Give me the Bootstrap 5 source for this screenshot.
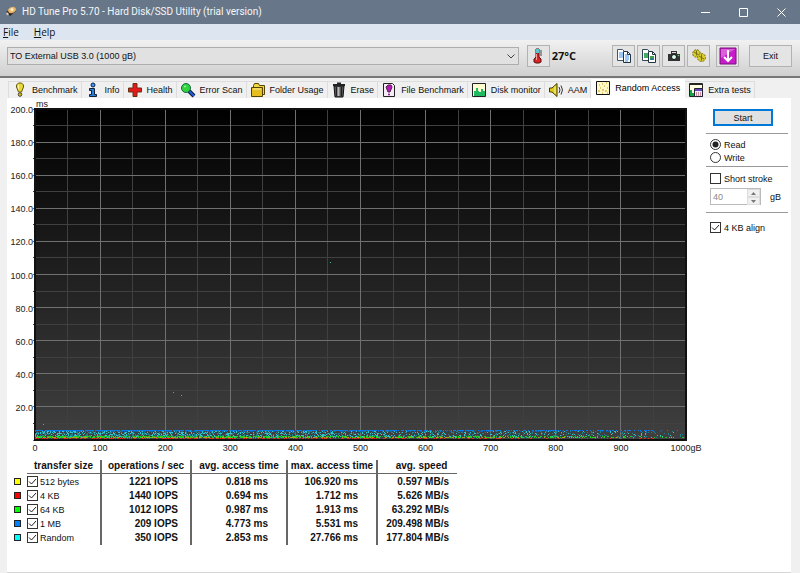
<!DOCTYPE html>
<html lang="en">
<head>
<meta charset="utf-8">
<meta name="viewport" content="width=device-width, initial-scale=1">
<title>HD Tune Pro 5.70 - Hard Disk/SSD Utility (trial version)</title>
<link href="https://cdn.jsdelivr.net/npm/bootstrap@5.3.0/dist/css/bootstrap.min.css" rel="stylesheet">
<style>
body{font-family:"Liberation Sans",Arial,sans-serif;font-size:9px;line-height:14px;color:#111;background:#f0f0f0}
svg{display:block;flex:none}
.titlebar{height:24px;background:#677689;color:#f4f6f8;padding-left:4px}
.titlebar h1{font-family:Roboto,sans-serif;font-size:10px;line-height:14px;font-weight:400;margin:0}
.winbtn{width:38px;height:24px;border:0;background:none;color:#fff;padding:0;display:flex;align-items:center;justify-content:center}
.menubar{height:16px;background:#dde6f0;font-family:"Open Sans",sans-serif;font-size:10px;padding-left:3px;gap:15px}
.menubar a{color:#111;text-decoration:none}
.toolbar{height:38px;padding:0 8px 4px 7px;background:linear-gradient(#f1f1f1,#d0d0d0);border-bottom:2px solid #777}
.drive{--bs-form-select-bg-img:url("data:image/svg+xml,%3Csvg xmlns='http://www.w3.org/2000/svg' viewBox='0 0 8 5'%3E%3Cpath fill='none' stroke='%23444' d='M.5.5 4 4 7.5.5'/%3E%3C/svg%3E");height:18px;min-height:0;padding:0 18px 0 2px;font-size:9px;line-height:14px;color:#111;background-color:#e1e1e1;border:1px solid #adadad;border-radius:0;background-position:right 3px center;background-size:8px 5px}
.tool{height:22px;min-width:23px;padding:0;border:1px solid #b2b2b2;border-radius:0;background:#e4e4e4;font-size:9px;line-height:14px;display:flex;align-items:center;justify-content:center;color:#111}
.gauge{margin-left:8px}
.savebtn{margin-left:6px}
.temp{font-family:"Open Sans",sans-serif;font-size:11px;font-weight:700;margin-left:2px;margin-right:36px}
.exit{width:43px;margin-left:10px}
.tabs{padding:2px 0 0 8px;height:20px;border:0;align-items:flex-end;flex-wrap:nowrap}
.tabs .nav-link{height:17px;display:flex;align-items:center;gap:4px;padding:0 3px 1px;border:1px solid #ddd;border-width:1px 1px 0 0;border-radius:0;margin:0;color:#111;background:#f0f0f0;white-space:nowrap}
.tabs .nav-item:first-child .nav-link{border-left-width:1px}
.tabs .nav-link.active{height:19px;background:#fff;padding:0 4px 2px;border-color:#fff}
.panel{margin:0 9px 0 7px;background:#fff;border-bottom:1px solid #d5d5d5;min-height:475px;padding:11px 3px 0 0}
.plotcol{padding:0 20px 0 28px;min-width:0}
.plot{width:100%;height:331px;overflow:visible;font:9px "Liberation Sans",Arial,sans-serif;fill:#222}
.side{width:82px}
.side hr{margin:0;border-top:1px solid #999;opacity:1}
.start{margin:0 15px 7px 7px;height:17px;padding:0;border:2px solid #0078d7;border-radius:0;background:#e1e1e1;font-size:9px;line-height:12px;color:#111}
.opt{display:flex;align-items:center;gap:3px;padding-left:4px;height:13px}
.form-check-input.tick,.form-check-input.dot{width:11px;height:11px;margin:0;border:1px solid #333;background-color:#fff;background-size:9px 9px;flex:none;float:none}
.tick{border-radius:0!important}
.tick:checked{background-image:url("data:image/svg+xml,%3Csvg xmlns='http://www.w3.org/2000/svg' viewBox='0 0 9 9'%3E%3Cpath fill='none' stroke='%23222' d='M1 4.5 3.5 7 8 2'/%3E%3C/svg%3E")!important}
.dot:checked{background-image:url("data:image/svg+xml,%3Csvg xmlns='http://www.w3.org/2000/svg' viewBox='0 0 9 9'%3E%3Ccircle cx='4.5' cy='4.5' r='3' fill='%23222'/%3E%3C/svg%3E")!important}
.modes{padding:4px 0 2px}
.limits{padding:5px 0 7px}
.limitrow{margin-top:3px;gap:9px}
.aligns{padding-top:8px}
.spin{width:51px;height:17px;border:1px solid #bbb;margin-left:4px}
.spin input{border:0;border-radius:0;padding:0 2px;min-height:0;height:15px;font-size:9px;line-height:14px;color:#888;background:#fff!important}
.spin button{border:1px solid #ddd;background:#f0f0f0;padding:0;width:13px;height:8px;display:flex;align-items:center;justify-content:center}
.results{margin:20px 0 0 7px;width:443px;font:bold 10px/14px "Liberation Sans",Arial,sans-serif;border-collapse:collapse}
.results th,.results td{padding:0;white-space:nowrap}
.results th{text-align:center;height:13px;line-height:12px}
.results thead th:not(:first-child){border-bottom:1px solid #666}
.results thead th:last-child{padding-left:8px}
.results .line{border-left:2px solid #666}
.results tbody td{text-align:right;height:14px;padding-right:12px}
.results tbody tr:first-child td{padding-top:1px;height:15px}
.results tbody td:nth-child(4),.results tbody td:nth-child(5){padding-right:18px}
.results tbody td:last-child{padding-right:8px}
.results tbody td:nth-child(-n+2){text-align:left;padding-right:0}
.results label{font-size:9px;font-weight:400;line-height:14px}
.pick{display:flex;align-items:center;gap:2px}
.c0{width:13px}.c1{width:74px}.c2,.c4{width:90px}.c3{width:96px}.c5{width:80px}
.swatch{display:block;width:7px;height:7px;border:1px solid #222}
.yel{background:#ff0}.red{background:#f00}.grn{background:#0f0}.blu{background:#0080ff}.cya{background:#0ff}
</style>
<script src="https://cdn.jsdelivr.net/npm/bootstrap@5.3.0/dist/js/bootstrap.bundle.min.js"></script>
</head>
<body>
<header class="titlebar d-flex align-items-center">
  <svg width="14" height="14" viewBox="0 0 14 14"><path d="M2 7 6 11 12 6 9 3z" fill="#2b211d"/><ellipse cx="8" cy="5" rx="4" ry="3" fill="#e9b56c" transform="rotate(-25 8 5)"/><circle cx="8" cy="4.500" r="1.500" fill="#fff2c8"/><path d="M3 7 5 9 4 10.500 2 9z" fill="#d8c8b8"/></svg>
  <h1 class="ms-1 flex-grow-1">HD Tune Pro 5.70 - Hard Disk/SSD Utility (trial version)</h1>
  <button class="winbtn" aria-label="Minimize"><svg width="9" height="9"><path d="M0 4.500H9" stroke="#fff"/></svg></button>
  <button class="winbtn" aria-label="Maximize"><svg width="9" height="9"><path d="M.5.5h8v8h-8z" fill="none" stroke="#fff"/></svg></button>
  <button class="winbtn" aria-label="Close"><svg width="9" height="9"><path d="M.5.5l8 8m0-8l-8 8" stroke="#fff"/></svg></button>
</header>
<nav class="menubar d-flex align-items-center" aria-label="Menu"><a href="#"><u>F</u>ile</a><a href="#"><u>H</u>elp</a></nav>
<div class="toolbar d-flex align-items-center">
  <select class="form-select drive flex-grow-1 w-auto" aria-label="Drive"><option>TO External USB 3.0 (1000 gB)</option></select>
  <button class="btn tool gauge" aria-label="Temperature"><svg width="10" height="16" viewBox="0 0 10 16"><path d="M3 1h3v8l2 2v3l-2 1H3l-2-1v-3l2-2z" fill="#d22" stroke="#511"/><path d="M3 1h3v4H3z" fill="#56c6d0"/><path d="M7 3h2M7 5h2M7 7h2" stroke="#444"/><path d="M3.500 6v6" stroke="#f99"/></svg></button>
  <span class="temp">27°C</span>
  <div class="d-flex" style="gap:2px">
    <button class="btn tool" aria-label="Copy text"><svg width="16" height="16" viewBox="0 0 16 16"><path d="M1.500 1.500h5l2 2v9h-7z" fill="#fff" stroke="#456"/><path d="M3 5h4M3 7h4M3 9h4" stroke="#3b8eea"/><path d="M7.500 3.500h4l3 3v8h-7z" fill="#fff" stroke="#234"/><path d="M9 7h4M9 9h4M9 11h4M9 13h3" stroke="#3b8eea"/><path d="M11.500 3.500v3h3" fill="none" stroke="#234"/></svg></button>
    <button class="btn tool" aria-label="Copy picture"><svg width="16" height="16" viewBox="0 0 16 16"><path d="M1.500 1.500h5l2 2v9h-7z" fill="#fff" stroke="#345"/><path d="M3 5h4v5H3z" fill="#4a6"/><path d="M7.500 3.500h4l3 3v8h-7z" fill="#fff" stroke="#234"/><path d="M9 8h4v4H9z" fill="#3b9b4e"/><path d="M9 12l2-2 2 1v1z" fill="#2a6bb0"/><path d="M11.500 3.500v3h3" fill="none" stroke="#234"/></svg></button>
    <button class="btn tool" aria-label="Screenshot"><svg width="14" height="14" viewBox="0 0 14 14"><path d="M1 5h3V2h6v3h3v7H1z" fill="#333"/><path d="M5 3.500h4" stroke="#ddd"/><circle cx="7" cy="8" r="2.500" fill="#dfe" stroke="#111"/><circle cx="11.500" cy="6.500" r=".8" fill="#6c6"/></svg></button>
    <button class="btn tool" aria-label="Options"><svg width="16" height="16" viewBox="0 0 16 16" fill="#d8cc2e" stroke="#777014"><circle cx="5.500" cy="5.500" r="3.800" stroke-dasharray="2 1"/><path d="M5.500 2.500v5M3 4l5 3"/><circle cx="10.500" cy="9.500" r="4" stroke-dasharray="2 1"/><path d="M10.500 6.500v6M8 8l5 3"/></svg></button>
  </div>
  <button class="btn tool savebtn" aria-label="Save"><svg width="18" height="18" viewBox="0 0 18 18"><path d="M1 1h16v16H1z" fill="#c81cc8" stroke="#75127a"/><path d="M2 2h14L2 11z" fill="#dc60dc"/><path d="M9 3v11M5 10l4 4 4-4" stroke="#fff" stroke-width="2" fill="none"/></svg></button>
  <button class="btn tool exit">Exit</button>
</div>
<ul class="nav nav-tabs tabs" aria-label="Tests">
  <li class="nav-item"><button class="nav-link"><svg width="16" height="16" viewBox="0 0 16 16"><path d="M4.500 3l2-2h3l2 2v2l-2 5H6.500L4.500 5z" fill="#e9d734" stroke="#665a10"/><path d="M6.500 3v4" stroke="#fff9aa"/><circle cx="8" cy="12.500" r="1.800" fill="#d3b91d" stroke="#443"/></svg>Benchmark</button></li>
  <li class="nav-item"><button class="nav-link"><svg width="16" height="16" viewBox="0 0 16 16"><circle cx="8" cy="3" r="2" fill="#39f" stroke="#124"/><path d="M4.500 6.500h5v6h2v2h-7v-2h2v-4h-2z" fill="#2b7fdc" stroke="#123"/></svg>Info</button></li>
  <li class="nav-item"><button class="nav-link"><svg width="16" height="16" viewBox="0 0 16 16"><path d="M6 1.500h4V6h4.500v4H10v4.500H6V10H1.500V6H6z" fill="#e3191b" stroke="#631"/></svg>Health</button></li>
  <li class="nav-item"><button class="nav-link"><svg width="16" height="16" viewBox="0 0 16 16"><path d="M9 9l5 5" stroke="#123" stroke-width="4"/><path d="M9 9l5 5" stroke="#2458e8" stroke-width="2"/><circle cx="6" cy="6" r="4.500" fill="#32d43d" stroke="#164"/><path d="M4 5l2-1" stroke="#cfc"/></svg>Error Scan</button></li>
  <li class="nav-item"><button class="nav-link"><svg width="16" height="16" viewBox="0 0 16 16"><path d="M3.500 3.500l1-2h4l1 2h5v9h-11z" fill="#f2d845" stroke="#554300"/><path d="M1.500 5.500h11v9h-11z" fill="#e5bf22" stroke="#554300"/><path d="M3 7h8" stroke="#fff4a0"/></svg>Folder Usage</button></li>
  <li class="nav-item"><button class="nav-link"><svg width="16" height="16" viewBox="0 0 16 16"><path d="M3 4h10l-1 11H4z" fill="#555" stroke="#111"/><path d="M5.500 5v9M10.500 5v9" stroke="#222"/><path d="M7.500 5v9" stroke="#bbb" stroke-width="2"/><path d="M2 3h12M6 1.500h4" stroke="#222" stroke-width="2"/></svg>Erase</button></li>
  <li class="nav-item"><button class="nav-link"><svg width="16" height="16" viewBox="0 0 16 16"><path d="M2.500 1.500h9l2 2v11h-11z" fill="#f5edf5" stroke="#222"/><path d="M5 5l2-2h3l1 2-2 5H7z" fill="#b51bb2" stroke="#525"/><circle cx="8" cy="12.500" r="1" fill="#919"/></svg>File Benchmark</button></li>
  <li class="nav-item"><button class="nav-link"><svg width="16" height="16" viewBox="0 0 16 16"><path d="M1.500 1.500h13v13h-13z" fill="#fffcd0" stroke="#222"/><path d="M3 14V9h2V6h2v3h1v1h2V7h2v2h2v5z" fill="#20ba63"/></svg>Disk monitor</button></li>
  <li class="nav-item"><button class="nav-link"><svg width="16" height="16" viewBox="0 0 16 16"><path d="M1.500 6H4l5-4.500v13L4 10H1.500z" fill="#dfc91c" stroke="#443b00"/><path d="M7 4.500v7" stroke="#fff59b"/><path d="M11 5q2 3 0 6M13 3.500q3 4.500 0 9" fill="none" stroke="#333"/></svg>AAM</button></li>
  <li class="nav-item"><button class="nav-link active" aria-current="page"><svg width="16" height="16" viewBox="0 0 16 16"><path d="M1.500 1.500h13v13h-13z" fill="#fff8c8" stroke="#111"/><path d="M3 11h2M5 8h1M7 10h2M4 5h1M9 6h1M11 3h1M12 8h1M10 11h2M7 4h1M7 13h1M12 13h1" stroke="#c89a16"/></svg>Random Access</button></li>
  <li class="nav-item"><button class="nav-link"><svg width="16" height="16" viewBox="0 0 16 16"><path d="M1.500 1.500h13v13h-13z" fill="#fffde0" stroke="#222"/><path d="M2 1h12v2H2z" fill="#222"/><path d="M2 14V8h2v3h2v3z" fill="#16a34a"/><path d="M6.500 6.500h8v8h-8z" fill="#eef" stroke="#223"/><path d="M7 8h7" stroke="#64b" stroke-width="2"/><path d="M8 11h1m1 0h1m1 0h1M8 13h1m1 0h1m1 0h1" stroke="#a34"/></svg>Extra tests</button></li>
</ul>
<main class="panel">
  <div class="d-flex align-items-start">
    <div class="plotcol flex-grow-1">
      <svg class="plot" id="plot" role="img" aria-label="Access time by position">
        <defs><linearGradient id="shade" x2="0" y2="1"><stop stop-color="#000"/><stop offset="1" stop-color="#404040"/></linearGradient></defs>
        <rect width="100%" height="100%" fill="url(#shade)"/>
        <g id="grid" shape-rendering="crispEdges"></g>
        <svg id="dots" width="100%" height="100%" viewBox="0 0 651 331" preserveAspectRatio="none" shape-rendering="crispEdges"></svg>
        <g id="labels"></g>
      </svg>
    </div>
    <form class="side d-flex flex-column" onsubmit="return false">
      <button class="btn start">Start</button>
      <hr>
      <div class="modes">
        <div class="opt"><input class="form-check-input dot" type="radio" name="mode" id="read" checked><label for="read">Read</label></div>
        <div class="opt"><input class="form-check-input dot" type="radio" name="mode" id="write"><label for="write">Write</label></div>
      </div>
      <hr>
      <div class="limits">
        <div class="opt"><input class="form-check-input tick" type="checkbox" id="stroke"><label for="stroke">Short stroke</label></div>
        <div class="limitrow d-flex align-items-center">
          <div class="spin d-flex"><input class="form-control" id="size" value="40" disabled><div><button type="button" aria-label="Increase" disabled><svg width="5" height="3"><path d="M0 3h5L2.500 0z" fill="#777"/></svg></button><button type="button" aria-label="Decrease" disabled><svg width="5" height="3"><path d="M0 0h5L2.500 3z" fill="#777"/></svg></button></div></div>
          <label for="size">gB</label>
        </div>
      </div>
      <hr>
      <div class="aligns">
        <div class="opt"><input class="form-check-input tick" type="checkbox" id="align" checked><label for="align">4 KB align</label></div>
      </div>
    </form>
  </div>
  <table class="results">
    <colgroup><col class="c0"><col class="c1"><col class="c2"><col class="c3"><col class="c4"><col class="c5"></colgroup>
    <thead><tr><th></th><th>transfer size</th><th class="line">operations / sec</th><th class="line">avg. access time</th><th class="line">max. access time</th><th class="line">avg. speed</th></tr></thead>
    <tbody>
      <tr><td><span class="swatch yel"></span></td><td><div class="pick"><input class="form-check-input tick" type="checkbox" id="s1" checked><label for="s1">512 bytes</label></div></td><td class="line">1221 IOPS</td><td class="line">0.818 ms</td><td class="line">106.920 ms</td><td class="line">0.597 MB/s</td></tr>
      <tr><td><span class="swatch red"></span></td><td><div class="pick"><input class="form-check-input tick" type="checkbox" id="s2" checked><label for="s2">4 KB</label></div></td><td class="line">1440 IOPS</td><td class="line">0.694 ms</td><td class="line">1.712 ms</td><td class="line">5.626 MB/s</td></tr>
      <tr><td><span class="swatch grn"></span></td><td><div class="pick"><input class="form-check-input tick" type="checkbox" id="s3" checked><label for="s3">64 KB</label></div></td><td class="line">1012 IOPS</td><td class="line">0.987 ms</td><td class="line">1.913 ms</td><td class="line">63.292 MB/s</td></tr>
      <tr><td><span class="swatch blu"></span></td><td><div class="pick"><input class="form-check-input tick" type="checkbox" id="s4" checked><label for="s4">1 MB</label></div></td><td class="line">209 IOPS</td><td class="line">4.773 ms</td><td class="line">5.531 ms</td><td class="line">209.498 MB/s</td></tr>
      <tr><td><span class="swatch cya"></span></td><td><div class="pick"><input class="form-check-input tick" type="checkbox" id="s5" checked><label for="s5">Random</label></div></td><td class="line">350 IOPS</td><td class="line">2.853 ms</td><td class="line">27.766 ms</td><td class="line">177.804 MB/s</td></tr>
    </tbody>
  </table>
</main>
<script>
const ns='http://www.w3.org/2000/svg';
function add(parent,name,attrs,text){const e=document.createElementNS(ns,name);for(const k in attrs)e.setAttribute(k,attrs[k]);if(text)e.textContent=text;document.getElementById(parent).appendChild(e);}
// minor lines first, then major lines on top
for(const major of [false,true]){
  const stroke=major?'#707070':'#404040';
  for(let i=0;i<=20;i++){
    if((i%2===0)!==major)continue;
    const p=i*5+'%';
    add('grid','line',{x1:p,x2:p,y1:0,y2:'100%',stroke});
    add('grid','line',{x1:-2,x2:'100%',y1:p,y2:p,stroke});
  }
}
add('grid','rect',{width:'100%',height:'100%',fill:'none',stroke:'#111','stroke-width':2});
for(let i=0;i<=10;i++){
  add('labels','text',{x:i*10+'%',y:'100%',dy:11,'text-anchor':'middle'},i===10?'1000gB':String(i*100));
  if(i<10)add('labels','text',{x:-2,y:i*10+'%',dy:4,'text-anchor':'end'},(200-i*20).toFixed(1));
}
add('labels','text',{x:1,y:-2},'ms');
let seed=7;
const rnd=()=>(seed=(seed*16807)%2147483647)/2147483647;
// sample density falls off towards the end of the disk
const spread=()=>Math.floor(650*(1-Math.pow(rnd(),.6)));
function series(n,y0,h,fill){let d='';for(let i=0;i<n;i++)d+='M'+spread()+' '+(y0+Math.floor(rnd()*h))+'h1v1h-1z';add('dots','path',{d,fill});}
series(1300,322,7,'#237f88');
series(750,322,6,'#31c6cc');
series(1100,321,1,'#087be8');
series(260,322,1,'#1262b0');
series(900,327,2,'#20d128');
series(260,328,1,'#b8a41a');
series(300,329,1,'#e02e1d');
add('dots','path',{d:'M295 153h1v1h-1zM138 283h1v1h-1zM146 286h1v1h-1zM8 315h1v1h-1z',fill:'#39b3aa'});
</script>
</body>
</html>
